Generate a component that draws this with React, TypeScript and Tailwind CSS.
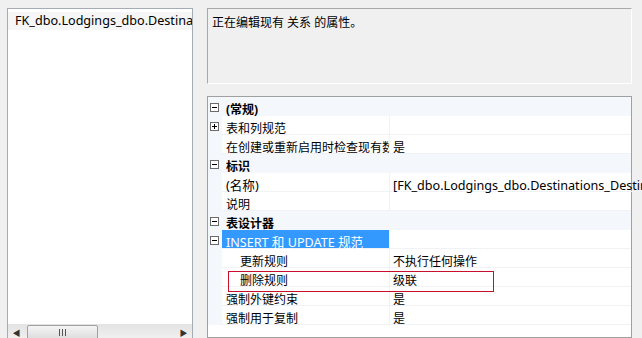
import React from "react";

type Row =
  | { kind: "cat"; label: string }
  | {
      kind: "prop";
      label: string;
      value?: string;
      toggle?: "plus" | "minus";
      indent?: boolean;
      selected?: boolean;
      wide?: boolean;
    };

const rows: Row[] = [
  { kind: "cat", label: "(常规)" },
  { kind: "prop", label: "表和列规范", toggle: "plus" },
  { kind: "prop", label: "在创建或重新启用时检查现有数据", value: "是" },
  { kind: "cat", label: "标识" },
  { kind: "prop", label: "(名称)", value: "[FK_dbo.Lodgings_dbo.Destinations_DestinationId]", wide: true },
  { kind: "prop", label: "说明" },
  { kind: "cat", label: "表设计器" },
  { kind: "prop", label: "INSERT 和 UPDATE 规范", toggle: "minus", selected: true, wide: true },
  { kind: "prop", label: "更新规则", value: "不执行任何操作", indent: true },
  { kind: "prop", label: "删除规则", value: "级联", indent: true },
  { kind: "prop", label: "强制外键约束", value: "是" },
  { kind: "prop", label: "强制用于复制", value: "是" },
];

function ToggleBox({ type }: { type: "plus" | "minus" }) {
  return (
    <svg width="9" height="9" viewBox="0 0 9 9" className="block">
      <rect x="0.5" y="0.5" width="8" height="8" fill="#fff" stroke="#6b6b6b" />
      <line x1="2" y1="4.5" x2="7" y2="4.5" stroke="#000" />
      {type === "plus" && <line x1="4.5" y1="2" x2="4.5" y2="7" stroke="#000" />}
    </svg>
  );
}

function GridRow({ row }: { row: Row }) {
  if (row.kind === "cat") {
    return (
      <div className="flex h-[19px] bg-[#f4f7fc]">
        <div className="w-[14px] shrink-0 flex items-center pl-[2px] pt-[2px]">
          <ToggleBox type="minus" />
        </div>
        <div className="pl-[4px] font-bold leading-[18px] whitespace-nowrap relative top-[4px]">{row.label}</div>
      </div>
    );
  }
  return (
    <div className="flex h-[19px]">
      <div className="w-[14px] shrink-0 flex items-center pl-[2px] pt-[2px] bg-[#f4f7fc]">
        {row.toggle && <ToggleBox type={row.toggle} />}
      </div>
      <div
        className={`w-[167px] shrink-0 overflow-x-clip whitespace-nowrap border-b border-[#f0f2f6] ${
          row.indent ? "pl-[18px]" : "pl-[4px]"
        } ${row.selected ? "bg-[#3399ff] text-white" : ""} ${row.wide ? "text-[12.6px]" : ""}`}
      >
        <div className="leading-[18px] relative top-[4px]">{row.label}</div>
      </div>
      <div className="w-px shrink-0 bg-[#f0f2f6]" />
      <div
        className={`flex-1 overflow-x-clip whitespace-nowrap pl-[3px] border-b border-[#f0f2f6] ${
          row.wide ? "text-[12.6px]" : ""
        }`}
      >
        <div className="leading-[18px] relative top-[4px]">{row.value}</div>
      </div>
    </div>
  );
}

function LeftPanel() {
  return (
    <div className="w-[186px] h-[334px] shrink-0 bg-white border border-[#a5acb5] flex flex-col">
      <div className="flex-1 pt-[3px]">
        <div className="h-[18px] leading-[18px] pl-[7px] whitespace-nowrap overflow-hidden bg-[#f6f6f6] text-[12.6px]">
          FK_dbo.Lodgings_dbo.Destinations_DestinationId
        </div>
      </div>
      <div className="h-[17px] bg-gradient-to-b from-[#e3e3e3] to-[#f2f2f2] flex items-center">
        <div className="w-[17px] flex justify-center text-[8px] text-[#333]">◀</div>
        <div className="w-[71px] h-[15px] ml-[2px] rounded-[2px] border border-[#a0a0a0] bg-gradient-to-b from-[#f5f5f5] to-[#dcdcdc] flex items-center justify-center gap-[2px]">
          <span className="w-px h-[7px] bg-[#555]" />
          <span className="w-px h-[7px] bg-[#555]" />
          <span className="w-px h-[7px] bg-[#555]" />
        </div>
        <div className="flex-1" />
        <div className="w-[17px] flex justify-center text-[8px] text-[#333]">▶</div>
      </div>
    </div>
  );
}

export default function App() {
  return (
    <div className="relative w-[642px] h-[338px] overflow-hidden bg-[#f0f0f0] flex gap-[14px] pl-[7px] pt-[8px] text-[12px] text-black font-['Noto_Sans','Noto_Sans_CJK_SC',sans-serif]">
      <LeftPanel />

      <div className="w-[425px] shrink-0 flex flex-col gap-[12px]">
        <div className="h-[78px] bg-[#f0f0f0] border border-t-[#a9a9a9] border-l-[#a9a9a9] border-r-white border-b-white pl-[4px] pt-[5px] leading-[18px]">
          正在编辑现有 关系 的属性。
        </div>

        <div className="h-[250px] bg-white border border-[#a0a0a0]">
          {rows.map((row, i) => (
            <GridRow key={i} row={row} />
          ))}
        </div>
      </div>

      <div className="absolute left-[228px] top-[271px] w-[266px] h-[21px] border border-[#c8102e]" />
    </div>
  );
}
